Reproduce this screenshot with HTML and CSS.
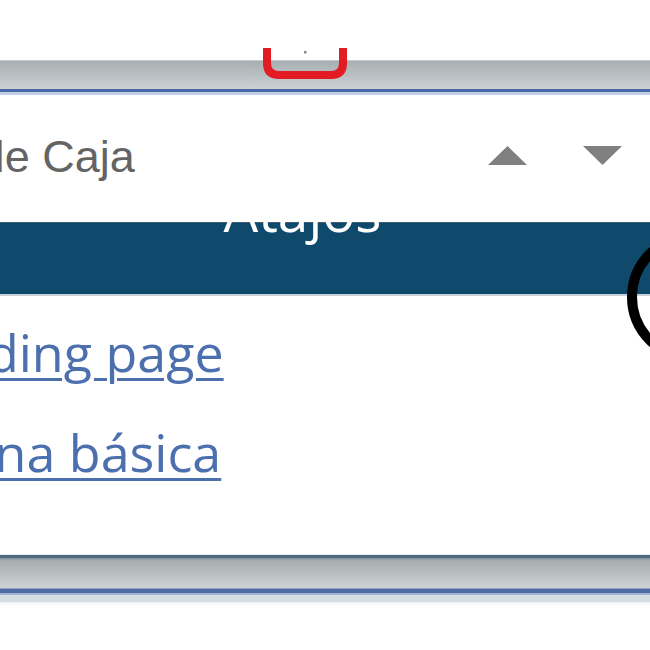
FILE: index.html
```html
<!DOCTYPE html>
<html lang="es">
<head>
<meta charset="utf-8">
<title>Atajos</title>
<link rel="stylesheet" href="styles.css">
</head>
<body>
<div class="page">
  <div class="top-space"></div>
  <div class="bar bar-top"></div>
  <div class="panel">
    <div class="select-row">
      <span class="select-text">Arqueo de Caja</span>
      <span class="arrows">
        <svg class="arrow" width="39" height="19" viewBox="0 0 39 19"><polygon points="19.5,0 39,19 0,19" fill="#808080"/></svg>
        <svg class="arrow" width="39" height="19" viewBox="0 0 39 19"><polygon points="0,0 39,0 19.5,19" fill="#808080"/></svg>
      </span>
    </div>
  </div>
  <div class="band"><div class="band-title">Atajos</div></div>
  <div class="links">
    <a class="link link-one" href="#">Landing page</a>
    <a class="link link-two" href="#">Página básica</a>
  </div>
  <div class="bar bar-bottom"></div>
  <svg class="overlay" width="650" height="650" viewBox="0 0 650 650">
    <path d="M267 48 V63 Q267 75 279 75 H331 Q343 75 343 63 V48" fill="none" stroke="#e31b23" stroke-width="8"/>
    <rect x="304" y="51" width="2.5" height="2.5" fill="#8a8a8a"/>
    <circle cx="693" cy="297" r="61" fill="none" stroke="#000" stroke-width="10"/>
  </svg>
</div>
</body>
</html>
```
FILE: styles.css
```css
html, body {
  margin: 0;
  padding: 0;
  background: #fff;
  overflow: hidden;
}
.page {
  position: relative;
  width: 650px;
  height: 650px;
  overflow: hidden;
  display: flex;
  flex-direction: column;
}
.top-space {
  height: 60px;
  flex: none;
}
.bar {
  flex: none;
}
.bar-top {
  height: 35px;
  background: linear-gradient(to bottom,
    #c8cccd 0, #c8cccd 1px,
    #a7afb1 1px, #cbd2d5 29px,
    #4a69a8 29px, #4a69a8 32px,
    #c3cfe3 32px, #c3cfe3 35px);
}
.panel {
  height: 127px;
  flex: none;
  box-sizing: border-box;
  padding-top: 37px;
}
.select-row {
  display: flex;
  align-items: flex-start;
  white-space: nowrap;
}
.select-text {
  font-family: "Liberation Sans", Arial, sans-serif;
  font-size: 45px;
  line-height: 50px;
  color: #646464;
  margin-left: -178px;
}
.arrows {
  margin-left: auto;
  margin-right: 28px;
  margin-top: 14px;
  display: flex;
  gap: 56px;
}
.arrow {
  display: block;
}
.band {
  height: 72px;
  flex: none;
  overflow: hidden;
  background: linear-gradient(to bottom, #3f5b6f 0, #3f5b6f 1px, #0f4a6c 1px);
  border-bottom: 2px solid #c9d2da;
}
.band-title {
  font-family: "Open Sans", sans-serif;
  font-size: 55px;
  line-height: 55px;
  color: #fff;
  text-align: center;
  margin-top: -39px;
  padding-right: 45px;
}
.links {
  height: 258px;
  flex: none;
  box-sizing: border-box;
  padding-top: 6px;
  display: flex;
  flex-direction: column;
  white-space: nowrap;
}
.link {
  font-family: "Open Sans", sans-serif;
  font-size: 52px;
  line-height: 100px;
  color: #4c6fae;
  text-decoration: underline;
  text-decoration-thickness: 3px;
  text-underline-offset: 6px;
}
.link-one {
  margin-left: -101px;
}
.link-two {
  margin-left: -107px;
}
.bar-bottom {
  height: 52px;
  background: linear-gradient(to bottom,
    #e6eaec 0, #e6eaec 1px,
    #4b6a80 1px, #4b6a80 4px,
    #80929d 4px, #a8aeb0 7px,
    #cdd3d5 34px,
    #4f6aa8 35px, #4f6aa8 39px,
    #9fb0d0 39px, #9fb0d0 41px,
    #d5dde2 41px, #d5dde2 48px,
    #eef2f4 48px, #ffffff 52px);
}
.overlay {
  position: absolute;
  top: 0;
  left: 0;
  pointer-events: none;
}
```
